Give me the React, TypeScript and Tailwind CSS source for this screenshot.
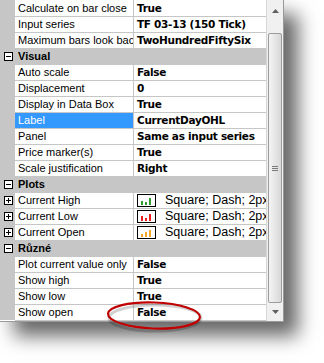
import React from 'react';

type Row =
  | { cat: string }
  | { name: string; value?: string; plot?: 'green' | 'red' | 'orange'; selected?: boolean };

const rows: Row[] = [
  { name: 'Calculate on bar close', value: 'True' },
  { name: 'Input series', value: 'TF 03-13 (150 Tick)' },
  { name: 'Maximum bars look back', value: 'TwoHundredFiftySix' },
  { cat: 'Visual' },
  { name: 'Auto scale', value: 'False' },
  { name: 'Displacement', value: '0' },
  { name: 'Display in Data Box', value: 'True' },
  { name: 'Label', value: 'CurrentDayOHL', selected: true },
  { name: 'Panel', value: 'Same as input series' },
  { name: 'Price marker(s)', value: 'True' },
  { name: 'Scale justification', value: 'Right' },
  { cat: 'Plots' },
  { name: 'Current High', plot: 'green' },
  { name: 'Current Low', plot: 'red' },
  { name: 'Current Open', plot: 'orange' },
  { cat: 'Různé' },
  { name: 'Plot current value only', value: 'False' },
  { name: 'Show high', value: 'True' },
  { name: 'Show low', value: 'True' },
  { name: 'Show open', value: 'False' },
];

const plotColors = {
  green: { c: '#2e9e2e', h: [4, 3, 7] },
  red: { c: '#ee1c1c', h: [5, 3, 7] },
  orange: { c: '#f5a623', h: [3, 5, 7] },
};

const ExpandBox = ({ open }: { open: boolean }) => (
  <svg width="9" height="9" viewBox="0 0 9 9" className="block">
    <rect x="0.5" y="0.5" width="8" height="8" fill="white" stroke="#000" />
    <line x1="2" y1="4.5" x2="7" y2="4.5" stroke="#000" />
    {!open && <line x1="4.5" y1="2" x2="4.5" y2="7" stroke="#000" />}
  </svg>
);

const PlotIcon = ({ kind }: { kind: 'green' | 'red' | 'orange' }) => {
  const p = plotColors[kind];
  return (
    <svg width="19" height="13" viewBox="0 0 19 13" className="block shrink-0">
      <rect x="0.5" y="0.5" width="18" height="12" fill="white" stroke="#000" />
      {p.h.map((h, i) => (
        <rect key={i} x={4 + i * 4} y={11 - h} width="2" height={h} fill={p.c} />
      ))}
    </svg>
  );
};

const App = () => {
  return (
    <div className="w-[324px] h-[363px] bg-white overflow-hidden relative font-['Liberation_Sans',Arial,sans-serif] text-[11px] leading-none text-black">
      <div className="flex w-[284px] h-[322px] border-r border-b border-[#9a9a9a] shadow-[14px_14px_18px_rgba(0,0,0,0.6)] bg-white">
        <div className="w-[266px] flex flex-col">
          {rows.map((r, i) =>
            'cat' in r ? (
              <div key={i} className="h-4 shrink-0 flex items-center bg-[#c6c6c6]">
                <div className="w-[15px] flex justify-center pl-px">
                  <ExpandBox open />
                </div>
                <span className="pl-[3px] font-bold">{r.cat}</span>
              </div>
            ) : (
              <div key={i} className="h-4 shrink-0 flex">
                <div className="w-[15px] shrink-0 bg-[#c6c6c6] flex items-center justify-center pl-px">
                  {r.plot && <ExpandBox open={false} />}
                </div>
                <div
                  className={`w-[119px] shrink-0 pl-[3px] flex items-center whitespace-nowrap overflow-hidden border-r border-[#c6c6c6] ${
                    i > 0 ? 'border-t' : ''
                  } ${r.selected ? 'bg-[#3399ff] text-white' : ''}`}
                >
                  {r.name}
                </div>
                <div
                  className={`flex-1 min-w-0 pl-[3px] flex items-center whitespace-nowrap overflow-hidden border-[#c6c6c6] ${
                    i > 0 ? 'border-t' : ''
                  }`}
                >
                  {r.plot ? (
                    <>
                      <PlotIcon kind={r.plot} />
                      <span className="pl-[9px] text-[12.5px]">Square; Dash; 2px</span>
                    </>
                  ) : (
                    <span className="font-bold font-['DejaVu_Sans',sans-serif] text-[10.5px] tracking-[-0.3px]">{r.value}</span>
                  )}
                </div>
              </div>
            )
          )}
          <div className="border-t border-[#c6c6c6] ml-[15px]" />
        </div>
        <div className="w-[17px] h-full border-l border-[#d6d6d6] bg-[#f0f0f0] flex flex-col items-center">
          <div className="h-[20px] w-full flex items-center justify-center pt-[2px]">
            <svg width="7" height="4" viewBox="0 0 7 4">
              <path d="M3.5 0 L7 4 L0 4 Z" fill="#606060" />
            </svg>
          </div>
          <div className="mt-[13px] h-[270px] w-[14px] rounded-[2px] border border-[#9c9c9c] bg-gradient-to-r from-[#f4f4f4] to-[#d8d8d8] flex items-center justify-center">
            <div className="flex flex-col gap-[1px]">
              <div className="w-[6px] h-px bg-[#7a7a7a]" />
              <div className="w-[6px] h-px bg-[#7a7a7a]" />
              <div className="w-[6px] h-px bg-[#7a7a7a]" />
            </div>
          </div>
          <div className="flex-1 w-full flex items-center justify-center">
            <svg width="7" height="4" viewBox="0 0 7 4">
              <path d="M0 0 L7 0 L3.5 4 Z" fill="#606060" />
            </svg>
          </div>
        </div>
      </div>
      <svg className="absolute left-[105px] top-[299px]" width="104" height="36" viewBox="0 0 104 36">
        <ellipse cx="50" cy="19" rx="46" ry="13" fill="none" stroke="rgba(0,0,0,0.18)" strokeWidth="3" />
        <ellipse cx="49" cy="16.5" rx="46" ry="13" fill="none" stroke="#c00000" strokeWidth="2.2" transform="rotate(2 49 16.5)" />
      </svg>
    </div>
  );
};

export default App;
